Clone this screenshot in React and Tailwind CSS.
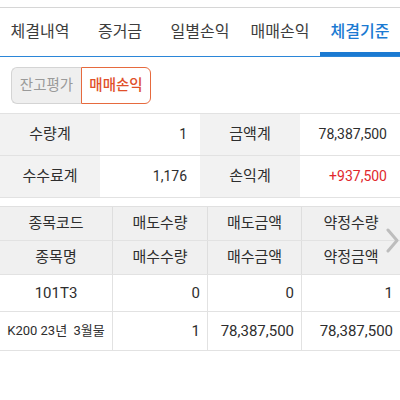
import React from 'react';

const tabs = ['체결내역', '증거금', '일별손익', '매매손익', '체결기준'];

const summary = [
    ['수량계', '1', '금액계', '78,387,500', false],
    ['수수료계', '1,176', '손익계', '+937,500', true]
];

const cols = ['w-[113px]', 'w-[95px]', 'w-[94px]', 'flex-1'];

const headRows = [
    ['종목코드', '매도수량', '매도금액', '약정수량'],
    ['종목명', '매수수량', '매수금액', '약정금액']
];

const dataRows = [
    { h: 'h-[37px]', cells: ['101T3', '0', '0', '1'] },
    { h: 'h-[39px]', cells: ['K200 23년  3월물', '1', '78,387,500', '78,387,500'] }
];

const App = () => {
    return (
        <div className="w-[400px] h-[400px] bg-white text-[#2e2e2e] font-['Roboto','Noto_Sans_CJK_KR',sans-serif] overflow-hidden relative">
            <div className="mt-[7px] border-t border-[#d6d6d6]">
                <div className="flex h-[49px] border-b border-[#2b86d8]">
                    {tabs.map((t, i) => (
                        <div
                            key={t}
                            className={`w-[80px] flex items-center justify-center text-[16px] ${i === 4
                                ? 'text-[#1b7ad2] font-medium shadow-[inset_0_-4px_0_#1b7ad2]'
                                : 'text-[#3d3d3d]'}`}
                        >
                            {t}
                        </div>
                    ))}
                </div>
            </div>

            <div className="flex ml-[11px] mt-[10px] h-[37px] text-[14.5px]">
                <div className="w-[70px] flex items-center justify-center bg-[#efefef] border border-[#d4d4d4] border-r-0 rounded-l-md text-[#9a9a9a]">
                    잔고평가
                </div>
                <div className="w-[70px] flex items-center justify-center bg-white border border-[#e66a3e] rounded-r-md text-[#e0502a] font-medium">
                    매매손익
                </div>
            </div>

            <div className="mt-[9px] border-t border-[#e2e2e2]">
                {summary.map(([l1, v1, l2, v2, red]) => (
                    <div key={l1} className="flex h-[42px] border-b border-[#e2e2e2] text-[14px]">
                        <div className="w-[100px] bg-[#f2f2f2] flex items-center justify-center text-[15px]">{l1}</div>
                        <div className="w-[100px] flex items-center justify-end pr-[13px]">{v1}</div>
                        <div className="w-[100px] bg-[#f2f2f2] flex items-center justify-center text-[15px]">{l2}</div>
                        <div className={`flex-1 flex items-center justify-end pr-[13px] ${red ? 'text-[#e1272c]' : ''}`}>{v2}</div>
                    </div>
                ))}
            </div>

            <div className="mt-[8px] border-t border-[#e0e0e0] text-[14px]">
                {headRows.map((row, r) => (
                    <div key={r} className="flex h-[34px] bg-[#f0f0f0] border-b border-[#e2e2e2] text-[15px]">
                        {row.map((c, i) => (
                            <div
                                key={c}
                                className={`${cols[i]} flex items-center justify-center ${i < 3 ? 'border-r border-[#dedede]' : ''}`}
                            >
                                {c}
                            </div>
                        ))}
                    </div>
                ))}
                {dataRows.map((row, r) => (
                    <div key={r} className={`flex ${row.h} border-b border-[#e2e2e2]`}>
                        {row.cells.map((c, i) => (
                            <div
                                key={i}
                                className={`${cols[i]} flex items-center ${i === 0
                                    ? `justify-center ${r === 1 ? 'text-[13px] whitespace-pre' : 'text-[15px]'}`
                                    : 'justify-end pr-[7px] text-[15px]'} ${i < 3 ? 'border-r border-[#e2e2e2]' : ''}`}
                            >
                                {c}
                            </div>
                        ))}
                    </div>
                ))}
            </div>

            <svg className="absolute left-[386px] top-[228px]" width="13" height="25" viewBox="0 0 13 25">
                <path d="M2 2 L11 12.5 L2 23" fill="none" stroke="#bdbdbd" strokeWidth="3" strokeLinecap="round" strokeLinejoin="round" />
            </svg>
        </div>
    );
};

export default App;
